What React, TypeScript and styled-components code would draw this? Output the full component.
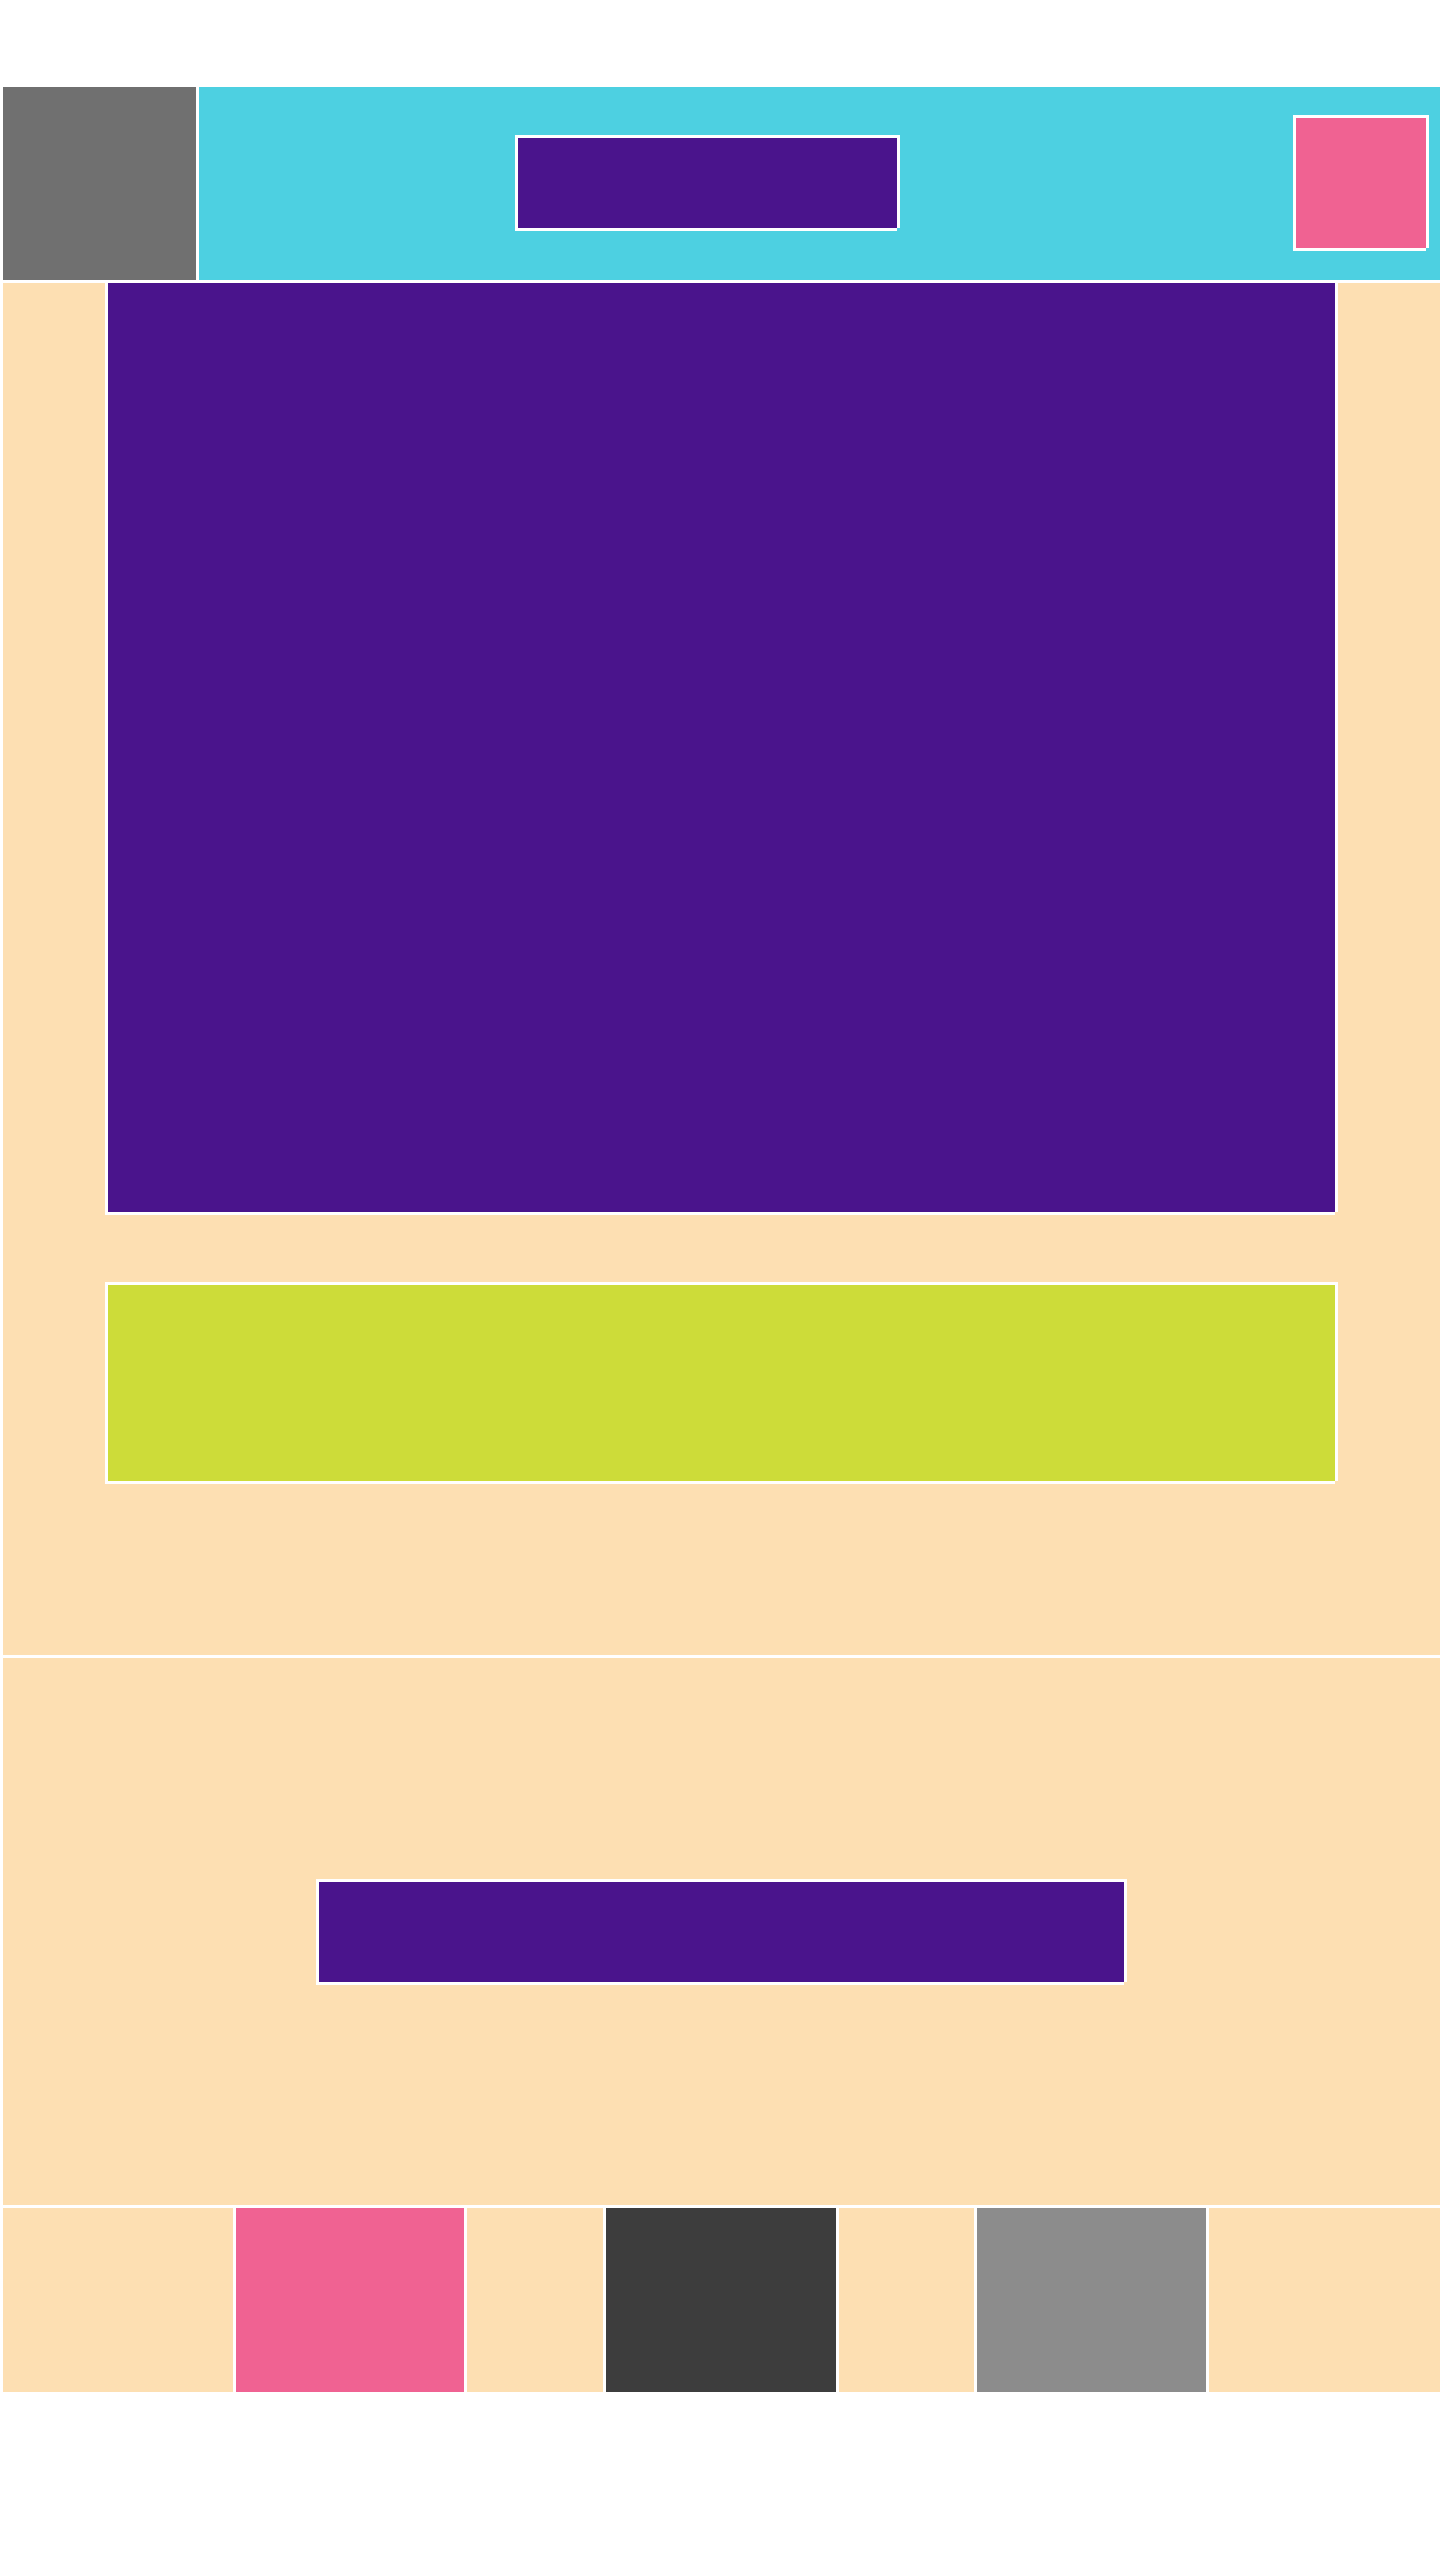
import React from "react";
import styled, { createGlobalStyle } from "styled-components";

const GlobalStyle = createGlobalStyle`
  html, body {
    margin: 0;
    padding: 0;
    background: #ffffff;
    font-family: "Liberation Sans", Arial, sans-serif;
  }
  * { box-sizing: border-box; }
`;

const BEIGE = "#fddfb2";
const PURPLE = "#4a148c";
const CYAN = "#4dd0e1";
const PINK = "#f06292";
const LIME = "#cddc39";

const Page = styled.div`
  width: 1440px;
  padding: 87px 0 0 3px;
  display: flex;
  flex-direction: column;
  gap: 3px;
  background: #ffffff;
`;

const Header = styled.header`
  height: 193px;
  display: flex;
  gap: 3px;
`;

const Logo = styled.div`
  width: 193px;
  flex: none;
  background: #707070;
`;

const TopBar = styled.div`
  flex: 1;
  display: flex;
  align-items: center;
  padding: 0 14px 4px 316px;
  background: ${CYAN};
`;

const Framed = styled.div<{ $bg: string; $w: number; $h: number; $noTop?: boolean }>`
  flex: none;
  width: ${(p) => p.$w}px;
  height: ${(p) => p.$h}px;
  background: ${(p) => p.$bg};
  border-left: 3px solid #ffffff;
  border-top: ${(p) => (p.$noTop ? "none" : "3px solid #ffffff")};
  box-shadow: 3px 0 0 #ffffff, 0 3px 0 #ffffff;
`;

const SearchBox = styled(Framed)``;

const Avatar = styled(Framed)`
  margin-left: auto;
`;

const MainSection = styled.section`
  height: 1372px;
  background: ${BEIGE};
  display: flex;
  flex-direction: column;
  align-items: center;
  padding-right: 3px;
`;

const Hero = styled(Framed)``;

const Banner = styled(Framed)`
  margin-top: 70px;
`;

const CtaSection = styled.section`
  height: 547px;
  background: ${BEIGE};
  display: flex;
  align-items: center;
  justify-content: center;
  padding: 0 3px 3px 0;
`;

const CtaButton = styled(Framed)``;

const Footer = styled.footer`
  height: 184px;
  display: flex;
  gap: 3px;
`;

const FooterCell = styled.div<{ $bg: string; $w?: number }>`
  background: ${(p) => p.$bg};
  ${(p) => (p.$w ? `width: ${p.$w}px; flex: none;` : "flex: 1;")}
`;

export default function App() {
  return (
    <>
      <GlobalStyle />
      <Page>
        <Header>
          <Logo />
          <TopBar>
            <SearchBox $bg={PURPLE} $w={382} $h={93} />
            <Avatar $bg={PINK} $w={133} $h={133} />
          </TopBar>
        </Header>
        <MainSection>
          <Hero $bg={PURPLE} $w={1230} $h={929} $noTop />
          <Banner $bg={LIME} $w={1230} $h={199} />
        </MainSection>
        <CtaSection>
          <CtaButton $bg={PURPLE} $w={808} $h={103} />
        </CtaSection>
        <Footer>
          <FooterCell $bg={BEIGE} $w={230} />
          <FooterCell $bg={PINK} $w={228} />
          <FooterCell $bg={BEIGE} />
          <FooterCell $bg="#3d3d3d" $w={230} />
          <FooterCell $bg={BEIGE} />
          <FooterCell $bg="#8c8c8c" $w={229} />
          <FooterCell $bg={BEIGE} $w={231} />
        </Footer>
      </Page>
    </>
  );
}
